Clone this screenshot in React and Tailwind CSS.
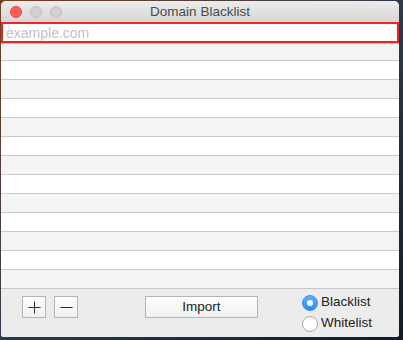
import React from 'react';

const FONT = { fontFamily: '"Liberation Sans", Arial, sans-serif' };

function ListRow({ gray, h = 'h-[19px]', border = true }) {
  return (
    <div className={`${h} ${gray ? 'bg-[#f4f4f4]' : 'bg-white'} ${border ? 'border-b border-[#cbcbcb]' : ''}`} />
  );
}

function SquareButton({ children }) {
  return (
    <button className="w-[24px] h-[22px] border border-[#b4b4b4] bg-gradient-to-b from-[#fdfdfd] to-[#f1f1f1] flex items-center justify-center">
      {children}
    </button>
  );
}

function Radio({ checked, label }) {
  return (
    <label className="flex items-center gap-[3px] h-[21px] text-[13.5px] text-[#222]">
      {checked ? (
        <span className="w-[16px] h-[16px] rounded-full bg-gradient-to-b from-[#5eb0ff] to-[#2a8cf6] border border-[#3a8fe6] flex items-center justify-center">
          <span className="w-[6px] h-[6px] rounded-full bg-white" />
        </span>
      ) : (
        <span className="w-[16px] h-[16px] rounded-full bg-white border border-[#a9a9a9]" />
      )}
      <span>{label}</span>
    </label>
  );
}

export default function App() {
  const rows = [];
  for (let i = 0; i < 11; i++) rows.push(<ListRow key={i} gray={i % 2 === 1} />);

  return (
    <div className="w-[403px] h-[340px] pt-[1px] pl-[1px] bg-gradient-to-br from-[#7b3d22] via-[#2e3a4c] to-[#141b26]" style={FONT}>
      <div className="w-[398px] h-[336px] rounded-t-[5px] rounded-b-[3px] overflow-hidden flex flex-col bg-[#ececec]">
        {/* title bar */}
        <div className="relative h-[21px] bg-gradient-to-b from-[#ececec] to-[#d6d6d6] flex items-center justify-center">
          <div className="absolute left-[9px] top-[5px] flex gap-[8px]">
            <span className="w-[12px] h-[12px] rounded-full bg-[#fc5f57] border border-[#e0443e]" />
            <span className="w-[12px] h-[12px] rounded-full bg-[#d1d1d1] border border-[#c0c0c0]" />
            <span className="w-[12px] h-[12px] rounded-full bg-[#d1d1d1] border border-[#c0c0c0]" />
          </div>
          <span className="text-[13.5px] text-[#4a4a4a] leading-none">Domain Blacklist</span>
        </div>

        {/* edit field */}
        <div className="h-[21px] bg-white border-2 border-[#f0241c] flex items-center px-[3px]">
          <span className="text-[14px] text-[#c2c2c2] leading-none">example.com</span>
        </div>
        <div className="h-[1px] bg-[#a9cdf4]" />

        {/* list */}
        <ListRow gray h="h-[17px]" />
        {rows}
        <ListRow gray h="h-[18px]" border={false} />

        {/* footer */}
        <div className="flex-1 border-t border-[#c6c6c6] bg-[#ececec] flex items-start pl-[21px] pt-[7px]">
          <SquareButton>
            <svg width="13" height="13" viewBox="0 0 13 13">
              <path d="M6.5 0.5v12M0.5 6.5h12" stroke="#2b2b2b" strokeWidth="1" fill="none" />
            </svg>
          </SquareButton>
          <div className="ml-[8px]">
            <SquareButton>
              <svg width="13" height="13" viewBox="0 0 13 13">
                <path d="M0.5 6.5h12" stroke="#2b2b2b" strokeWidth="1" fill="none" />
              </svg>
            </SquareButton>
          </div>
          <button className="ml-[67px] w-[113px] h-[22px] border border-[#b4b4b4] bg-gradient-to-b from-[#fdfdfd] to-[#f1f1f1] text-[13.5px] text-[#222] leading-none">
            Import
          </button>
          <div className="ml-[44px] -mt-[4px] flex flex-col">
            <Radio checked label="Blacklist" />
            <Radio label="Whitelist" />
          </div>
        </div>
      </div>
    </div>
  );
}
